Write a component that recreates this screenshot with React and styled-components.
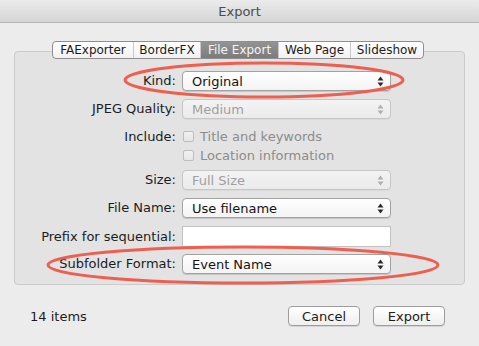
import React from 'react';
import styled, { createGlobalStyle } from 'styled-components';

const Global = createGlobalStyle`
  html, body { margin: 0; padding: 0; background: #ececec; }
  body { font-family: "Lucida Grande", "DejaVu Sans", sans-serif; }
`;

const Window = styled.div`
  position: relative;
  width: 479px;
  height: 346px;
  background: #ececec;
  overflow: hidden;
  font-size: 12px;
  color: #1c1c1c;
`;

const TitleBar = styled.div`
  height: 22px;
  display: flex;
  align-items: center;
  justify-content: center;
  background: linear-gradient(#ebebeb, #d5d5d5);
  border-bottom: 1px solid #b4b4b4;
  color: #4c4c4c;
  font-size: 13px;
`;

const Body = styled.div`
  padding: 18px 14px 0 14px;
`;

const Tabs = styled.div`
  position: relative;
  z-index: 1;
  display: flex;
  width: fit-content;
  margin: 0 0 -8px 38px;
  height: 16px;
  border: 1px solid #8f8f8f;
  border-radius: 4px;
  overflow: hidden;
  background: linear-gradient(#ffffff, #f1f1f1);
`;

const Tab = styled.div`
  display: flex;
  align-items: center;
  justify-content: center;
  width: ${(p) => p.$w}px;
  font-size: 12px;
  color: ${(p) => (p.$active ? '#f4f4f4' : '#1c1c1c')};
  background: ${(p) => (p.$active ? 'linear-gradient(#939393, #7b7b7b)' : 'transparent')};
  border-left: 1px solid #c9c9c9;
  &:first-child { border-left: none; }
`;

const Panel = styled.div`
  height: 234px;
  box-sizing: border-box;
  border: 1px solid #cbcbcb;
  border-radius: 4px;
  background: #e3e3e3;
  padding-top: 19px;
`;

const Form = styled.div`
  display: grid;
  grid-template-columns: 161px 209px;
  column-gap: 6px;
  align-items: center;
`;

const Label = styled.div`
  text-align: right;
  font-size: 13px;
  height: ${(p) => p.$h || 20}px;
  line-height: ${(p) => p.$h || 20}px;
  margin-bottom: ${(p) => (p.$mb ?? 8)}px;
  white-space: nowrap;
`;

const Select = styled.div`
  position: relative;
  height: 20px;
  box-sizing: border-box;
  margin-bottom: 8px;
  padding-left: 9px;
  display: flex;
  align-items: center;
  font-size: 13px;
  border: 1px solid ${(p) => (p.$disabled ? '#c6c6c6' : '#a2a2a2')};
  border-radius: 4px;
  color: ${(p) => (p.$disabled ? '#a0a0a0' : '#141414')};
  background: ${(p) => (p.$disabled ? 'linear-gradient(#f3f3f3, #ebebeb)' : 'linear-gradient(#ffffff, #f3f3f3)')};
  box-shadow: 0 1px 0 rgba(0, 0, 0, ${(p) => (p.$disabled ? 0.04 : 0.12)});
`;

const Arrows = styled.svg`
  position: absolute;
  right: 6px;
  top: 4px;
`;

const TextInput = styled.div`
  height: 21px;
  box-sizing: border-box;
  margin-bottom: 7px;
  background: #ffffff;
  border: 1px solid #c2c2c2;
`;

const CheckRow = styled.div`
  display: flex;
  align-items: center;
  gap: 6px;
  height: 19px;
  margin-bottom: ${(p) => p.$mb || 0}px;
  padding-left: 1px;
  color: #8c8c8c;
  font-size: 13px;
`;

const Check = styled.span`
  width: 11px;
  height: 11px;
  box-sizing: border-box;
  border: 1px solid #bdbdbd;
  border-radius: 2px;
  background: linear-gradient(#f1f1f1, #e6e6e6);
`;

const Footer = styled.div`
  display: flex;
  align-items: center;
  padding: 21px 20px 0 16px;
  font-size: 13px;
`;

const Count = styled.div`
  flex: 1;
`;

const Button = styled.div`
  width: 72px;
  height: 20px;
  box-sizing: border-box;
  margin-left: ${(p) => p.$ml || 0}px;
  display: flex;
  align-items: center;
  justify-content: center;
  border: 1px solid #9d9d9d;
  border-radius: 4px;
  background: linear-gradient(#ffffff, #efefef);
  box-shadow: 0 1px 0 rgba(0, 0, 0, 0.1);
  font-size: 13px;
`;

const Overlay = styled.svg`
  position: absolute;
  left: 0;
  top: 0;
  pointer-events: none;
`;

const Updown = ({ disabled }) => (
  <Arrows width="7" height="11" viewBox="0 0 7 11">
    <path d="M3.5 0.5 L6.5 4.5 L0.5 4.5 Z" fill={disabled ? '#b0b0b0' : '#2a2a2a'} />
    <path d="M3.5 10.5 L6.5 6.5 L0.5 6.5 Z" fill={disabled ? '#b0b0b0' : '#2a2a2a'} />
  </Arrows>
);

const Dropdown = ({ value, disabled }) => (
  <Select $disabled={disabled}>
    {value}
    <Updown disabled={disabled} />
  </Select>
);

const tabs = [
  { name: 'FAExporter', w: 80 },
  { name: 'BorderFX', w: 66 },
  { name: 'File Export', w: 77, active: true },
  { name: 'Web Page', w: 71 },
  { name: 'Slideshow', w: 72 },
];

export default function App() {
  return (
    <Window>
      <Global />
      <TitleBar>Export</TitleBar>
      <Body>
        <Tabs>
          {tabs.map((t) => (
            <Tab key={t.name} $w={t.w} $active={t.active}>
              {t.name}
            </Tab>
          ))}
        </Tabs>
        <Panel>
          <Form>
            <Label>Kind:</Label>
            <Dropdown value="Original" />

            <Label>JPEG Quality:</Label>
            <Dropdown value="Medium" disabled />

            <Label $h={19} $mb={0}>Include:</Label>
            <CheckRow>
              <Check />
              Title and keywords
            </CheckRow>
            <div />
            <CheckRow $mb={5}>
              <Check />
              Location information
            </CheckRow>

            <Label>Size:</Label>
            <Dropdown value="Full Size" disabled />

            <Label>File Name:</Label>
            <Dropdown value="Use filename" />

            <Label $h={21} $mb={7}>Prefix for sequential:</Label>
            <TextInput />

            <Label>Subfolder Format:</Label>
            <Dropdown value="Event Name" />
          </Form>
        </Panel>
        <Footer>
          <Count>14 items</Count>
          <Button>Cancel</Button>
          <Button $ml={13}>Export</Button>
        </Footer>
      </Body>
      <Overlay width="479" height="346">
        <ellipse cx="264" cy="80" rx="139" ry="17" fill="none" stroke="#ee5f4f" strokeWidth="3" />
        <ellipse cx="243" cy="265" rx="195" ry="18" fill="none" stroke="#ee5f4f" strokeWidth="3" />
      </Overlay>
    </Window>
  );
}
